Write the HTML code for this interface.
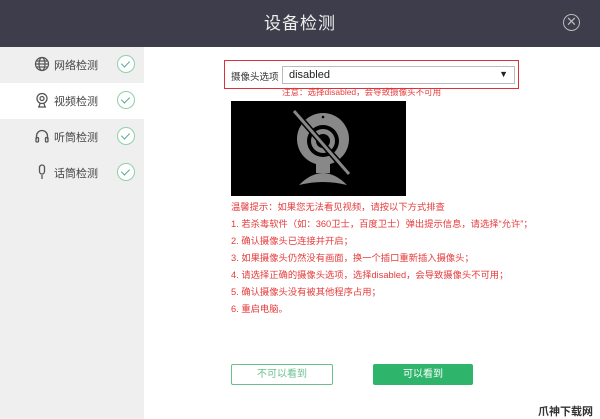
<!DOCTYPE html>
<html><head><meta charset="utf-8"><style>
*{margin:0;padding:0;box-sizing:border-box}
body{width:600px;height:419px;overflow:hidden;background:#fff;font-family:"Liberation Sans","Noto Sans CJK SC",sans-serif;position:relative}
.hd{position:absolute;left:0;top:0;width:600px;height:47px;background:#3d3d4b;color:#eee;font-size:17px;text-align:center;line-height:47px;letter-spacing:1px}
.x{position:absolute;left:563px;top:14px;width:17px;height:17px;border:1.5px solid #bbb;border-radius:50%;color:#bbb;font-size:13px;line-height:14px;text-align:center;letter-spacing:0}
.sb{position:absolute;left:0;top:47px;width:144px;height:372px;background:#efefef}
.row{position:absolute;left:0;width:144px;height:36px;font-size:11px;color:#444}
.row.sel{background:#fff}
.row .ic{position:absolute;left:34px;top:9px;width:16px;height:16px}
.row .t{position:absolute;left:54px;top:10px}
.row .ck{position:absolute;left:117px;top:8px;width:18px;height:18px;border:1.3px solid #8fd0a8;border-radius:50%;background:#fff}
.row .ck:after{content:"";position:absolute;left:5px;top:3px;width:4px;height:7px;border-right:1.3px solid #5a9;border-bottom:1.3px solid #5a9;transform:rotate(45deg)}
.red{color:#e53b3b;font-size:9.3px}
</style></head><body>
<div class="hd">设备检测<div class="x">✕</div></div>
<div class="sb">
<div class="row" style="top:0"><svg class="ic" viewBox="0 0 16 16" fill="none" stroke="#555" stroke-width="1.2"><circle cx="8" cy="8" r="6.5"/><ellipse cx="8" cy="8" rx="3" ry="6.5"/><line x1="1.5" y1="8" x2="14.5" y2="8"/><line x1="2.5" y1="5" x2="13.5" y2="5"/><line x1="2.5" y1="11" x2="13.5" y2="11"/></svg><span class="t">网络检测</span><span class="ck"></span></div>
<div class="row sel" style="top:36px"><svg class="ic" viewBox="0 0 16 16" fill="none" stroke="#555" stroke-width="1.3"><circle cx="8" cy="6.5" r="5"/><circle cx="8" cy="6.5" r="2"/><path d="M4 15h8M6 11.5l-1 3.5M10 11.5l1 3.5"/></svg><span class="t">视频检测</span><span class="ck"></span></div>
<div class="row" style="top:72px"><svg class="ic" viewBox="0 0 16 16" fill="none" stroke="#555" stroke-width="1.3"><path d="M2.5 11V8a5.5 5.5 0 0111 0v3"/><rect x="2" y="9.5" width="2.5" height="4.5" rx="1"/><rect x="11.5" y="9.5" width="2.5" height="4.5" rx="1"/></svg><span class="t">听筒检测</span><span class="ck"></span></div>
<div class="row" style="top:108px"><svg class="ic" viewBox="0 0 16 16" fill="none" stroke="#555" stroke-width="1.3"><rect x="5.5" y="1" width="5" height="9" rx="2.5"/><path d="M8 11v4"/></svg><span class="t">话筒检测</span><span class="ck"></span></div>
</div>
<div style="position:absolute;left:224px;top:60px;width:295px;height:29px;border:1.5px solid #d9323a"></div>
<div style="position:absolute;left:231px;top:69px;font-size:9.5px;color:#333">摄像头选项</div>
<div style="position:absolute;left:282px;top:66px;width:233px;height:18px;border:1px solid #bbb;background:#fff;font-size:11px;color:#222;padding:2px 6px">disabled<span style="position:absolute;right:6px;top:2px;font-size:9px">▼</span></div>
<div class="red" style="position:absolute;left:282px;top:86px;font-size:8.5px">注意：选择disabled，会导致摄像头不可用</div>
<div style="position:absolute;left:231px;top:101px;width:175px;height:95px;background:#000">
<svg width="175" height="95" viewBox="0 0 175 95"><circle cx="92" cy="38" r="26" fill="#888"/><circle cx="92" cy="40" r="16" fill="#000"/><circle cx="92" cy="40" r="12" fill="#888"/><circle cx="92" cy="40" r="7" fill="#000"/><circle cx="92" cy="16" r="1.3" fill="#000"/><path d="M68 84 Q92 60 116 84 Q92 78 68 84Z" fill="#888"/><rect x="85" y="62" width="14" height="10" fill="#888"/><line x1="63" y1="10" x2="118" y2="73" stroke="#000" stroke-width="6"/><line x1="63" y1="10" x2="118" y2="73" stroke="#888" stroke-width="3"/></svg></div>
<div class="red" style="position:absolute;left:231px;top:199px;line-height:17px">温馨提示：如果您无法看见视频，请按以下方式排查<br>1. 若杀毒软件（如：360卫士，百度卫士）弹出提示信息，请选择“允许”；<br>2. 确认摄像头已连接并开启；<br>3. 如果摄像头仍然没有画面，换一个插口重新插入摄像头；<br>4. 请选择正确的摄像头选项，选择disabled，会导致摄像头不可用；<br>5. 确认摄像头没有被其他程序占用；<br>6. 重启电脑。</div>
<div style="position:absolute;left:231px;top:364px;width:102px;height:21px;border:1px solid #6bbf8e;border-radius:2px;color:#6bbf8e;font-size:10px;text-align:center;line-height:19px">不可以看到</div>
<div style="position:absolute;left:373px;top:364px;width:100px;height:21px;background:#2fb56b;border-radius:2px;color:#fff;font-size:10px;text-align:center;line-height:21px">可以看到</div>
<div style="position:absolute;left:538px;top:403px;font-size:11px;color:#333;font-weight:bold">爪神下载网</div>
</body></html>
